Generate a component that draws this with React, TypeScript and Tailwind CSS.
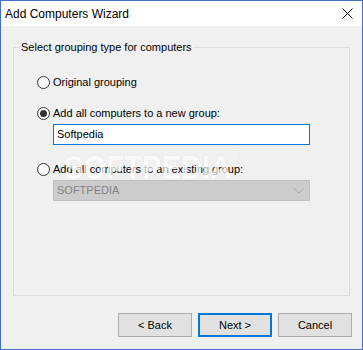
import React from "react";

const font = { fontFamily: '"Liberation Sans", Arial, sans-serif' };

function Radio({ checked }: { checked?: boolean }) {
  return (
    <span className="w-[13px] h-[13px] rounded-full border border-[#333333] bg-white flex items-center justify-center shrink-0">
      {checked && <span className="w-[7px] h-[7px] rounded-full bg-[#333333]" />}
    </span>
  );
}

export default function App() {
  return (
    <div
      className="w-[363px] h-[350px] border border-[#4372c4] flex flex-col bg-[#f0f0f0] text-black text-[11px] overflow-hidden"
      style={font}
    >
      <div className="h-[25px] bg-white flex items-center justify-between pl-[4px] pr-[9px] shrink-0">
        <span className="text-[12px] leading-none">Add Computers Wizard</span>
        <svg width="11" height="11" viewBox="0 0 11 11" className="shrink-0">
          <path d="M0.5 0.5 L10.5 10.5 M10.5 0.5 L0.5 10.5" stroke="#000" strokeWidth="1" />
        </svg>
      </div>
      <div className="flex-1 flex flex-col pt-[14px] pl-[12px] pr-[12px] relative">
        <fieldset className="border border-[#dcdcdc] h-[256px] w-[337px]">
          <legend className="ml-[6px] px-[1px] leading-[14px]">Select grouping type for computers</legend>
          <div className="flex flex-col pl-[23px]">
            <div className="flex items-center gap-[3px] h-[16px] mt-[20px]">
              <Radio />
              <span>Original grouping</span>
            </div>
            <div className="flex items-center gap-[3px] h-[16px] mt-[15px]">
              <Radio checked />
              <span>Add all computers to a new group:</span>
            </div>
            <div className="ml-[16px] mt-[3px] w-[257px] h-[21px] border border-[#0078d7] bg-white flex items-center pl-[3px]">
              Softpedia
            </div>
            <div className="flex items-center gap-[3px] h-[16px] mt-[16px]">
              <Radio />
              <span>Add all computers to an existing group:</span>
            </div>
            <div className="ml-[16px] mt-[3px] w-[257px] h-[21px] border border-[#bfbfbf] bg-[#cccccc] flex items-center justify-between pl-[3px] pr-[5px] text-[#838383]">
              <span>SOFTPEDIA</span>
              <svg width="10" height="6" viewBox="0 0 10 6">
                <path d="M0.5 0.5 L5 5 L9.5 0.5" stroke="#a8a8a8" strokeWidth="1" fill="none" />
              </svg>
            </div>
          </div>
        </fieldset>
        <div className="flex justify-end gap-[6px] mt-[17px] -mr-[2px]">
          <button className="w-[74px] h-[24px] border border-[#adadad] bg-[#e1e1e1] flex items-center justify-center">
            &lt; Back
          </button>
          <button className="w-[74px] h-[24px] border-2 border-[#0078d7] bg-[#e1e1e1] flex items-center justify-center">
            Next &gt;
          </button>
          <button className="w-[74px] h-[24px] border border-[#adadad] bg-[#e1e1e1] flex items-center justify-center">
            Cancel
          </button>
        </div>
        <div
          className="absolute left-[63px] top-[124px] text-[34px] font-bold text-white opacity-70 leading-none origin-left scale-x-[0.86] pointer-events-none select-none whitespace-nowrap"
          style={{ fontFamily: '"Liberation Sans", Arial, sans-serif', textShadow: "0 0 1px #d8d8d8" }}
        >
          SOFTPEDIA<span className="text-[12px] align-top">®</span>
        </div>
      </div>
    </div>
  );
}
